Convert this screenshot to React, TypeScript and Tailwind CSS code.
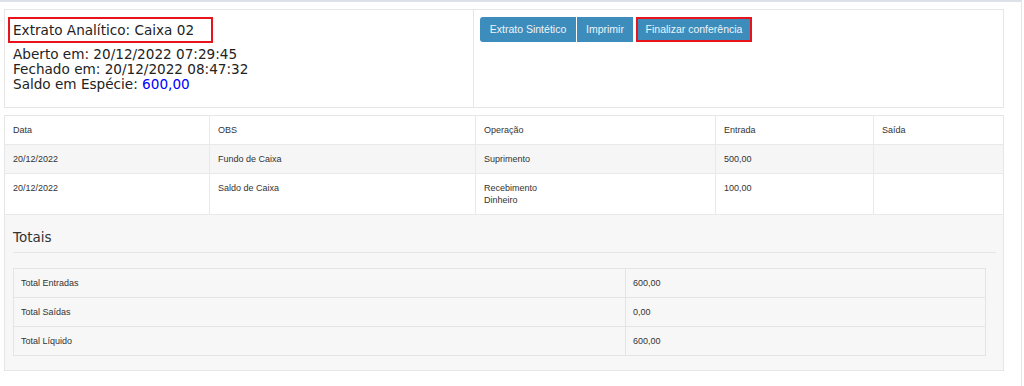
import React from "react";

const rows = [
  { data: "20/12/2022", obs: "Fundo de Caixa", op: ["Suprimento"], ent: "500,00", sai: "", bg: "bg-[#f6f6f6]" },
  { data: "20/12/2022", obs: "Saldo de Caixa", op: ["Recebimento", "Dinheiro"], ent: "100,00", sai: "", bg: "bg-white" },
];

const totals = [
  ["Total Entradas", "600,00"],
  ["Total Saídas", "0,00"],
  ["Total Líquido", "600,00"],
];

const grid = "grid grid-cols-[205px_266px_240px_158px_1fr]";
const cell = "px-[8px] pt-[8px] pb-[8px] leading-[12px] border-r border-[#e9e9e9] last:border-r-0";

export default function App() {
  return (
    <div className="w-[1024px] h-[386px] bg-white overflow-hidden flex">
      <div className="w-[1022px] h-full border-r border-[#e2e6ec] flex flex-col">
        <div className="h-[2px] bg-[#dde2e9]" />
        <div className="pl-[4px] pr-[17px] pt-[7px]">
          {/* Top panel */}
          <div className="border border-[#e6e6e6] flex h-[99px]" style={{ fontFamily: '"DejaVu Sans", sans-serif' }}>
            <div className="w-[469px] border-r border-[#e6e6e6] pl-[3px] pt-[7px] text-[#222]">
              <div className="w-[205px] h-[26px] border-2 border-[#e8141b] pl-[3px] text-[13.6px] leading-[22px]">
                Extrato Analítico: Caixa 02
              </div>
              <div className="mt-[4px] pl-[5px] text-[13.6px] leading-[15px]">
                <div>Aberto em: 20/12/2022 07:29:45</div>
                <div>Fechado em: 20/12/2022 08:47:32</div>
                <div>
                  Saldo em Espécie: <span className="text-[#0000ff]">600,00</span>
                </div>
              </div>
            </div>
            <div className="flex-1 pl-[6px] pt-[7px]">
              <div className="flex items-start" style={{ fontFamily: '"Liberation Sans", Arial, sans-serif' }}>
                <button className="w-[96px] h-[25px] bg-[#3c8dbc] rounded-l-[3px] text-[#eef4f9] text-[10.5px] flex items-center justify-center">
                  Extrato Sintético
                </button>
                <button className="ml-[1px] w-[56px] h-[25px] bg-[#3c8dbc] text-[#eef4f9] text-[10.5px] flex items-center justify-center">
                  Imprimir
                </button>
                <button className="ml-[3px] w-[116px] h-[25px] bg-[#3c8dbc] border-2 border-[#e8141b] text-[#eef4f9] text-[10.5px] flex items-center justify-center">
                  Finalizar conferência
                </button>
              </div>
            </div>
          </div>

          {/* Table panel */}
          <div className="mt-[7px] border border-[#e6e6e6] text-[9px] text-[#333]" style={{ fontFamily: '"Liberation Sans", Arial, sans-serif' }}>
            <div className={`${grid} bg-white border-b border-[#e9e9e9]`}>
              <div className={cell}>Data</div>
              <div className={cell}>OBS</div>
              <div className={cell}>Operação</div>
              <div className={cell}>Entrada</div>
              <div className={cell}>Saída</div>
            </div>
            {rows.map((r, i) => (
              <div key={i} className={`${grid} ${r.bg} border-b border-[#e9e9e9]`}>
                <div className={cell}>{r.data}</div>
                <div className={cell}>{r.obs}</div>
                <div className={cell}>
                  {r.op.map((o) => (
                    <div key={o}>{o}</div>
                  ))}
                </div>
                <div className={cell}>{r.ent}</div>
                <div className={cell}>{r.sai}</div>
              </div>
            ))}
            <div className="bg-[#f7f7f7] pl-[8px] pr-[7px] pt-[13px] pb-[14px]">
              <div
                className="text-[13.5px] leading-[18px] text-[#333] pb-[6px] border-b border-[#e6e6e6]"
                style={{ fontFamily: '"DejaVu Sans", sans-serif' }}
              >
                Totais
              </div>
              <div className="mt-[15px] mr-[10px] border border-[#e4e4e4]">
                {totals.map(([k, v], i) => (
                  <div key={k} className={`grid grid-cols-[612px_1fr] ${i < 2 ? "border-b border-[#e4e4e4]" : ""}`}>
                    <div className="px-[7px] py-[8px] leading-[12px] border-r border-[#e4e4e4]">{k}</div>
                    <div className="px-[7px] py-[8px] leading-[12px]">{v}</div>
                  </div>
                ))}
              </div>
            </div>
          </div>
        </div>
      </div>
    </div>
  );
}
